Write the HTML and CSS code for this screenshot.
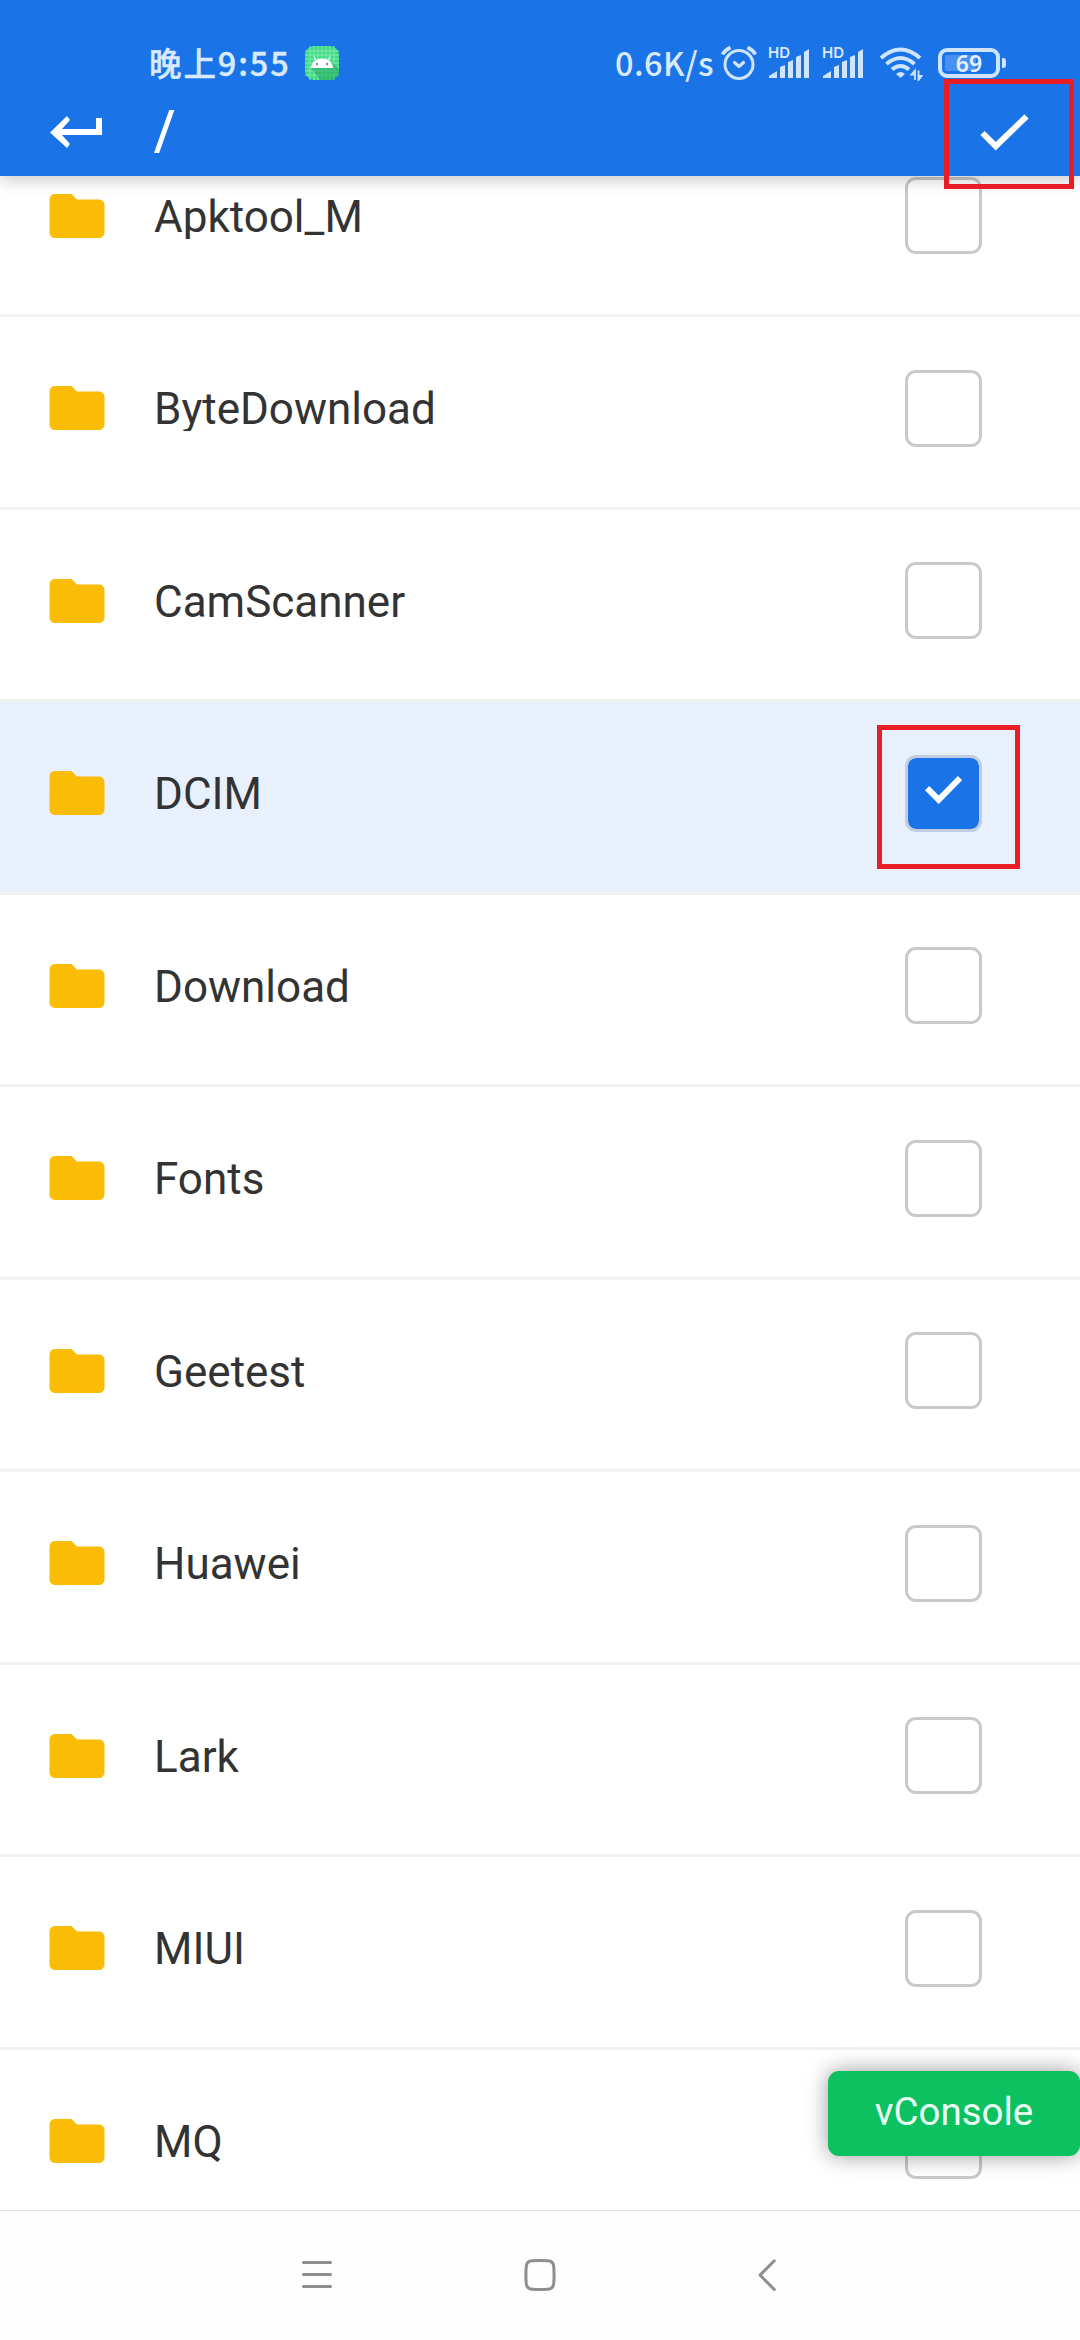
FILE: index.html
```html
<!DOCTYPE html>
<html lang="zh-CN">
<head>
<meta charset="utf-8">
<title>Folders</title>
<link rel="stylesheet" href="styles.css">
</head>
<body>
<svg width="0" height="0" class="defs">
  <symbol id="folder" viewBox="0 0 24 24"><path d="M10 4H4c-1.100 0-1.990.9-1.990 2L2 18c0 1.100.9 2 2 2h16c1.100 0 2-.9 2-2V8c0-1.100-.9-2-2-2h-8l-2-2z"/></symbol>
  <symbol id="signal" viewBox="0 0 42 31"><path d="M1 30v-2l8-5v7zM12 19l5-2v13h-5zM20 14l5-2v18h-5zM28 9l5-2v23h-5zM36 4l5-3v29h-5z"/></symbol>
</svg>
<div class="screen">
  <header class="header">
    <div class="status">
      <span class="time">晚上9:55</span>
      <svg class="app" viewBox="0 0 34 34">
        <rect width="34" height="34" rx="9" fill="#3ddc84"/>
        <path d="M5 0v34M9 0v34M13 0v34M17 0v34M21 0v34M25 0v34M29 0v34M0 5h34M0 9h34M0 13h34M0 17h34M0 21h34M0 25h34M0 29h34" stroke="#8ceab5" stroke-width=".9"/>
        <path d="M6 22l9 12h10q9 0 9-9v-2l-6-6z" fill="#149653" opacity=".45"/>
        <path d="M6 22c.5-6 5-9.500 11-9.500S27.500 16 28 22z" fill="#fff"/>
        <path d="M11 14l-2-3.500M23 14l2-3.500" stroke="#fff" stroke-width="1"/>
        <circle cx="12" cy="18" r="1" fill="#3a7a5a"/><circle cx="22" cy="18" r="1" fill="#3a7a5a"/>
      </svg>
      <span class="speed">0.6K/s</span>
      <svg class="alarm" viewBox="0 0 36 36" fill="none" stroke="#cfe4ff">
        <circle cx="18" cy="19.500" r="14" stroke-width="3"/>
        <path d="M13.500 17.500l4.500 4 4.500-4" stroke-width="3.200" stroke-linecap="round" stroke-linejoin="round"/>
        <path d="M1.500 9.500Q4 5 9.500 2.500M34.500 9.500Q32 5 26.500 2.500" stroke-width="3.600"/>
      </svg>
      <span class="sim"><i>HD</i><svg><use href="#signal"/></svg></span>
      <span class="sim"><i>HD</i><svg><use href="#signal"/></svg></span>
      <svg class="wifi" viewBox="0 0 44 34" fill="none" stroke="#cfe4ff">
        <path d="M2 11Q21.500-6 41 11M7.500 17q14-12 28 0M13 22.500q8.500-7 17 0" stroke-width="4"/>
        <path d="M17 27q4.500-4 9 0l-4.500 4z" fill="#cfe4ff" stroke="none"/>
        <path d="M36 33V23.500l-3.500 4H36M39.500 23.500V33l3-4h-3" stroke-width="1.800"/>
      </svg>
      <span class="battery"><b>69</b></span>
    </div>
    <div class="bar">
      <svg class="back" viewBox="0 0 54 34"><path d="M47 2h6v17H13l8 9-3 4L1 16.500 18 0l3 4-8 9h34z" fill="#fff"/></svg>
      <span class="path">/</span>
      <svg class="done" viewBox="0 0 50 38"><path d="M2.500 19 15.700 32.200 46.500 2.400" fill="none" stroke="#fff" stroke-width="6"/></svg>
    </div>
  </header>
  <main class="list">
    <div class="row"><svg class="folder"><use href="#folder"/></svg><span class="name">Apktool_M</span><span class="box"></span></div>
    <div class="row"><svg class="folder"><use href="#folder"/></svg><span class="name">ByteDownload</span><span class="box"></span></div>
    <div class="row"><svg class="folder"><use href="#folder"/></svg><span class="name">CamScanner</span><span class="box"></span></div>
    <div class="row selected"><svg class="folder"><use href="#folder"/></svg><span class="name">DCIM</span><span class="box checked"><svg viewBox="0 0 37 28"><path d="M2.100 12.100 13.700 23.800 35 2.100" fill="none" stroke="#fff" stroke-width="6"/></svg></span></div>
    <div class="row"><svg class="folder"><use href="#folder"/></svg><span class="name">Download</span><span class="box"></span></div>
    <div class="row"><svg class="folder"><use href="#folder"/></svg><span class="name">Fonts</span><span class="box"></span></div>
    <div class="row"><svg class="folder"><use href="#folder"/></svg><span class="name">Geetest</span><span class="box"></span></div>
    <div class="row"><svg class="folder"><use href="#folder"/></svg><span class="name">Huawei</span><span class="box"></span></div>
    <div class="row"><svg class="folder"><use href="#folder"/></svg><span class="name">Lark</span><span class="box"></span></div>
    <div class="row"><svg class="folder"><use href="#folder"/></svg><span class="name">MIUI</span><span class="box"></span></div>
    <div class="row"><svg class="folder"><use href="#folder"/></svg><span class="name">MQ</span><span class="box"></span></div>
  </main>
  <nav class="nav">
    <svg viewBox="0 0 1080 129" fill="none" stroke="#8e8e8e" stroke-width="3" stroke-linecap="round" stroke-linejoin="round">
      <path d="M303.500 51.600h27M303.500 63.600h27M303.500 75.600h27"/>
      <path d="M532 49.800Q540 49.200 548 49.800Q553 50.200 553.700 55Q554.500 64 553.700 73Q553 77.800 548 78.200Q540 78.800 532 78.200Q527 77.800 526.300 73Q525.500 64 526.300 55Q527 50.200 532 49.800z"/>
      <path d="M774.300 49.800 760 64l14.300 14.500"/>
    </svg>
  </nav>
  <div class="vconsole">vConsole</div>
  <div class="mark mark-done"></div>
  <div class="mark mark-box"></div>
</div>
</body>
</html>
```
FILE: styles.css
```css
* { box-sizing: border-box; }
body { margin: 0; background: #fff; font-family: Roboto, "Noto Sans CJK SC", sans-serif; }
svg { display: block; flex: none; }
.defs { position: absolute; }
.screen { position: relative; width: 1080px; height: 2340px; overflow: hidden; display: flex; flex-direction: column; }
.header { position: relative; z-index: 1; height: 176px; flex: none; background: #1b73e8; box-shadow: 0 5px 14px rgba(0,0,0,.2); padding-top: 42px; }
.status { display: flex; align-items: center; height: 44px; padding-left: 149px; color: #d9eaff; font-family: "Noto Sans CJK SC", sans-serif; font-weight: 500; }
.time { width: 156px; margin-top: -5px; font-size: 32.500px; line-height: 44px; letter-spacing: 1.900px; white-space: nowrap; -webkit-text-stroke: .4px #d9eaff; }
.app { width: 34px; height: 34px; margin-top: -2px; }
.speed { margin-left: 276px; width: 106px; margin-top: -5px; font-size: 32.500px; line-height: 44px; letter-spacing: .4px; white-space: nowrap; }
.alarm { width: 36px; height: 36px; margin: -3px 11px 0 0; }
.sim { position: relative; width: 42px; height: 32px; margin: -2px 12px 0 0; padding-top: 1px; }
.sim svg { width: 42px; height: 31px; fill: #cfe4ff; }
.sim i { position: absolute; left: 0; top: -2px; font: 600 15px/15px Inter, sans-serif; }
.wifi { width: 44px; height: 34px; margin: -1px 0 0 3px; }
.battery { position: relative; width: 62px; height: 30px; margin: -2px 0 0 15px; border: 4px solid #cfe4ff; border-radius: 9px; display: flex; align-items: center; justify-content: center; background: linear-gradient(90deg, #4a90f0 65%, #1b73e8 65%) content-box; padding: 3px; }
.battery::after { content: ""; position: absolute; right: -10px; top: 6px; width: 4px; height: 10px; border-radius: 0 3px 3px 0; background: #cfe4ff; }
.battery b { font: 600 23px/22px "Noto Sans", sans-serif; color: #e4f1ff; }
.bar { display: flex; align-items: center; height: 90px; padding: 0 50px 0 49px; }
.back { width: 54px; height: 34px; margin-top: 3px; }
.path { flex: 1; margin-left: 51px; color: #fff; font-size: 55px; line-height: 64px; font-weight: 500; }
.done { width: 50px; height: 38px; margin-top: 3px; }
.list { flex: 1; min-height: 0; overflow: hidden; }
.row { display: flex; align-items: center; height: 192.500px; padding: 0 98px 7px 44px; border-bottom: 3px solid #f1f1f1; }
.row:first-child { margin-top: -51.500px; }
.folder { width: 66px; height: 66px; fill: #fbbc05; }
.name { flex: 1; margin: 2px 0 0 44px; height: 44px; overflow: hidden; color: #333; font-size: 44px; line-height: 44px; }
.box { width: 77px; height: 77px; border: 3px solid #c9c9c9; border-radius: 11px; }
.selected { background: #e8f0fe; }
.checked { border-color: #c1cde0; background: #1b73e8; background-clip: padding-box; display: flex; justify-content: center; padding-top: 18px; }
.checked svg { width: 37px; height: 28px; }
.nav { height: 130px; flex: none; border-top: 1px solid #dedede; background: #fefefe; }
.nav svg { width: 1080px; height: 129px; }
.vconsole { position: absolute; z-index: 2; right: 0; top: 2071px; width: 252px; height: 85px; border-radius: 11px; background: #0bc160; color: #eafff3; font-size: 38.500px; line-height: 82px; text-align: center; box-shadow: 0 0 22px rgba(0,0,0,.4); }
.mark { position: absolute; z-index: 3; border: 5px solid #ea1c24; }
.mark-done { left: 944px; top: 79px; width: 130px; height: 110px; }
.mark-box { left: 877px; top: 725px; width: 143px; height: 144px; }
```
